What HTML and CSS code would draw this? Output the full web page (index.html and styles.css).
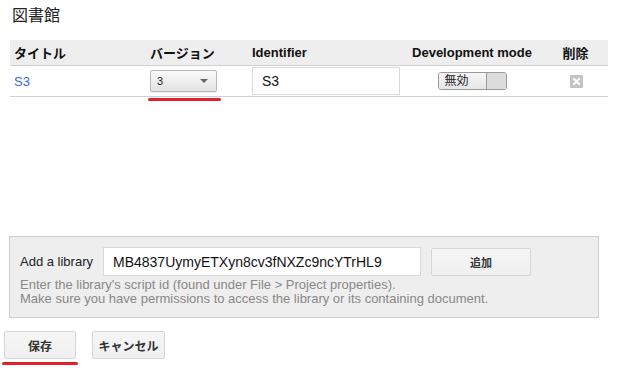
FILE: index.html
```html
<!DOCTYPE html>
<html lang="ja">
<head>
<meta charset="utf-8">
<link rel="stylesheet" href="styles.css">
</head>
<body>
<div class="page">
  <h1 class="title">図書館</h1>
  <div class="libtable">
    <div class="row head">
      <div class="c c1">タイトル</div>
      <div class="c c2">バージョン</div>
      <div class="c c3">Identifier</div>
      <div class="c c4">Development mode</div>
      <div class="c c5">削除</div>
    </div>
    <div class="row body">
      <div class="c c1"><a class="link" href="#">S3</a></div>
      <div class="c c2">
        <div class="select-wrap">
          <div class="select"><span>3</span><span class="arrow"></span></div>
          <div class="mark mark-select"></div>
        </div>
      </div>
      <div class="c c3"><div class="input id-input">S3</div></div>
      <div class="c c4">
        <div class="toggle"><span class="toggle-label">無効</span><span class="toggle-knob"></span></div>
      </div>
      <div class="c c5">
        <svg class="del" width="13" height="13" viewBox="0 0 13 13"><rect x="0" y="0" width="13" height="13" rx="1" fill="#c4c4c4"/><path d="M4 4 L9 9 M9 4 L4 9" stroke="#fff" stroke-width="2" stroke-linecap="square"/></svg>
      </div>
    </div>
  </div>

  <div class="addpanel">
    <div class="addline">
      <span class="addlabel">Add a library</span>
      <div class="input lib-input">MB4837UymyETXyn8cv3fNXZc9ncYTrHL9</div>
      <div class="btn addbtn">追加</div>
    </div>
    <div class="help">Enter the library's script id (found under File &gt; Project properties).<br>Make sure you have permissions to access the library or its containing document.</div>
  </div>

  <div class="actions">
    <div class="btn-wrap">
      <div class="btn savebtn">保存</div>
      <div class="mark mark-save"></div>
    </div>
    <div class="btn cancelbtn">キャンセル</div>
  </div>
</div>
</body>
</html>
```
FILE: styles.css
```css
html, body {
  margin: 0;
  padding: 0;
  background: #fff;
}
body {
  font-family: "Liberation Sans", Arial, "Noto Sans CJK JP", sans-serif;
  font-size: 13px;
  color: #222;
}
.page {
  width: 632px;
  height: 372px;
  padding: 0;
  position: relative;
}
.title {
  margin: 0;
  padding: 6px 0 0 12px;
  height: 34px;
  box-sizing: border-box;
  font-size: 16px;
  font-weight: normal;
  line-height: 20px;
  color: #222;
}
.libtable {
  margin-left: 10px;
  width: 598px;
}
.row {
  display: grid;
  grid-template-columns: 136px 102px 156px 136px 68px;
  align-items: center;
}
.head {
  margin-top: 6px;
  height: 25px;
  background: #eeeeee;
  border-bottom: 1px solid #d0d0d0;
  font-weight: bold;
  color: #111;
}
.body {
  height: 30px;
  border-bottom: 1px solid #d0d0d0;
}
.c1, .c2, .c3 {
  padding-left: 4px;
}
.c4, .c5 {
  text-align: center;
  display: flex;
  justify-content: center;
}
.head .c5 { padding-left: 3px; }
.link {
  color: #3a66d9;
  text-decoration: none;
  font-size: 13px;
}
.select-wrap {
  position: relative;
  width: 67px;
}
.select {
  height: 22px;
  box-sizing: border-box;
  border: 1px solid #b9b9b9;
  border-radius: 2px;
  background: linear-gradient(#fafafa, #e2e2e2);
  display: flex;
  align-items: center;
  justify-content: space-between;
  padding: 0 8px 0 6px;
  font-size: 11px;
  color: #222;
  box-shadow: 0 1px 1px rgba(0,0,0,0.08);
}
.arrow {
  width: 0;
  height: 0;
  border-left: 4px solid transparent;
  border-right: 4px solid transparent;
  border-top: 4px solid #666;
}
.mark {
  position: absolute;
  height: 3px;
  background: #e3212a;
  border-radius: 2px;
}
.mark-select {
  left: -2px;
  right: -4px;
  top: 28px;
}
.input {
  background: #fff;
  border: 1px solid #d9d9d9;
  box-sizing: border-box;
  font-size: 14px;
  color: #111;
  display: flex;
  align-items: center;
}
.id-input {
  width: 148px;
  height: 28px;
  padding-left: 9px;
}
.toggle {
  width: 69px;
  height: 18px;
  box-sizing: border-box;
  border: 1px solid #9a9a9a;
  border-radius: 3px;
  display: flex;
  overflow: hidden;
}
.toggle-label {
  width: 48px;
  background: linear-gradient(#f6f6f6, #e6e6e6);
  border-right: 1px solid #9a9a9a;
  font-size: 12px;
  line-height: 16px;
  text-align: left;
  padding-left: 6px;
  box-sizing: border-box;
}
.toggle-knob {
  flex: 1;
  background: #dcdcdc;
}
.del {
  display: block;
  margin-left: 4px;
}
.addpanel {
  position: relative;
  margin: 139px 0 0 9px;
  width: 590px;
  height: 82px;
  box-sizing: border-box;
  background: #eeeeee;
  border: 1px solid #cccccc;
  padding: 10px 0 0 10px;
}
.addline {
  display: flex;
  align-items: center;
}
.addlabel {
  font-size: 13px;
  color: #222;
  width: 83px;
}
.lib-input {
  width: 318px;
  height: 29px;
  padding-left: 9px;
  font-size: 14px;
}
.btn {
  box-sizing: border-box;
  border: 1px solid #d6d6d6;
  border-radius: 2px;
  background: linear-gradient(#f6f6f6, #efefef);
  font-weight: bold;
  font-size: 11px;
  color: #333;
  display: flex;
  align-items: center;
  justify-content: center;
}
.addbtn {
  margin-left: 10px;
  width: 100px;
  height: 28px;
}
.help {
  color: #888;
  font-size: 13px;
  line-height: 14px;
  margin-top: 2px;
}
.actions {
  display: flex;
  gap: 16px;
  margin: 13px 0 0 4px;
}
.btn-wrap {
  position: relative;
}
.savebtn, .cancelbtn {
  height: 28px;
  font-size: 12px;
}
.savebtn { width: 72px; }
.cancelbtn { width: 73px; }
.mark-save {
  left: -2px;
  right: -2px;
  top: 31px;
}
```
